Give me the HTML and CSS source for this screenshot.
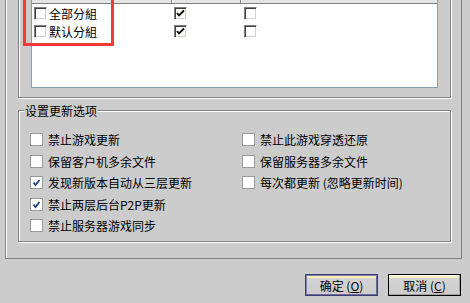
FILE: index.html
```html
<!DOCTYPE html>
<html>
<head>
<meta charset="utf-8">
<link rel="stylesheet" href="styles.css">
</head>
<body>
<div class="tabpage">
  <div class="group group-list">
    <div class="listbox">
      <div class="lv-header">
        <div class="hc hc1"></div>
        <div class="hc hc2"></div>
        <div class="hc hc3"></div>
      </div>
      <div class="lv-row">
        <div class="cell c1"><span class="lcb"></span><span class="lbl">全部分組</span></div>
        <div class="cell c2"><span class="lcb on"><svg viewBox="0 0 9 9" width="9" height="9"><path d="M1 4 L3 6.5 L8 1.5" fill="none" stroke="#000" stroke-width="1.8"/></svg></span></div>
        <div class="cell c3"><span class="lcb"></span></div>
      </div>
      <div class="lv-row">
        <div class="cell c1"><span class="lcb"></span><span class="lbl">默认分組</span></div>
        <div class="cell c2"><span class="lcb on"><svg viewBox="0 0 9 9" width="9" height="9"><path d="M1 4 L3 6.5 L8 1.5" fill="none" stroke="#000" stroke-width="1.8"/></svg></span></div>
        <div class="cell c3"><span class="lcb"></span></div>
      </div>
    </div>
  </div>
  <div class="group group-opts">
    <div class="legend">设置更新选项</div>
    <div class="opts">
      <label class="opt"><span class="cb"></span><span>禁止游戏更新</span></label>
      <label class="opt"><span class="cb"></span><span>禁止此游戏穿透还原</span></label>
      <label class="opt"><span class="cb"></span><span>保留客户机多余文件</span></label>
      <label class="opt"><span class="cb"></span><span>保留服务器多余文件</span></label>
      <label class="opt"><span class="cb on"><svg viewBox="0 0 9 9" width="9" height="9"><path d="M1.5 4.5 L3.5 7 L7.5 2" fill="none" stroke="#1c3f86" stroke-width="1.8"/></svg></span><span>发现新版本自动从三层更新</span></label>
      <label class="opt"><span class="cb"></span><span>每次都更新 (忽略更新时间)</span></label>
      <label class="opt"><span class="cb on"><svg viewBox="0 0 9 9" width="9" height="9"><path d="M1.5 4.5 L3.5 7 L7.5 2" fill="none" stroke="#1c3f86" stroke-width="1.8"/></svg></span><span>禁止两层后台P2P更新</span></label>
      <span class="opt empty"></span>
      <label class="opt"><span class="cb"></span><span>禁止服务器游戏同步</span></label>
    </div>
  </div>
</div>
<div class="buttons">
  <button class="btn default">确定 (<u>O</u>)</button>
  <button class="btn">取消 (<u>C</u>)</button>
</div>
<div class="highlight"></div>
</body>
</html>
```
FILE: styles.css
```css
* { box-sizing: border-box; }
html, body { margin: 0; padding: 0; }
body {
  width: 470px;
  height: 303px;
  overflow: hidden;
  position: relative;
  background: #cccccc;
  font-family: "Noto Sans CJK SC", "Noto Sans", sans-serif;
  font-size: 12px;
  line-height: 13px;
  color: #000;
}
.tabpage {
  margin: -40px 0 0 5px;
  width: 457px;
  border: 1px solid #808080;
  box-shadow: inset 1px 1px #fff;
  padding: 9px 0 16px 12px;
}
.group {
  width: 433px;
  border: 1px solid #808080;
  box-shadow: inset 1px 1px #fff, 1px 1px #fff;
}
.group-list {
  padding: 14px 0 9px 12px;
}
.listbox {
  width: 407px;
  height: 103px;
  border: 1px solid #7f9db9;
  background: #fff;
}
.lv-header {
  display: flex;
  height: 18px;
  background: #e4e4e4;
  border-bottom: 1px solid #808080;
}
.hc { height: 17px; border-right: 1px solid #808080; box-shadow: 1px 0 #fff; }
.hc1 { width: 140px; }
.hc2 { width: 69px; }
.hc3 { flex: 1; border-right: none; box-shadow: none; }
.lv-row { display: flex; height: 18px; align-items: center; }
.cell { display: flex; align-items: center; }
.c1 { width: 140px; padding-left: 2px; }
.c2 { width: 69px; padding-left: 2px; }
.c3 { padding-left: 3px; }
.lbl { margin-left: 2px; }
.lcb {
  width: 13px; height: 13px;
  border: 1px solid;
  border-color: #808080 #fff #fff #808080;
  box-shadow: inset 1px 1px #404040, inset -1px -1px #d4d0c8;
  background: #fff;
  display: flex; align-items: center; justify-content: center;
}
.group-opts {
  margin-top: 12px;
  height: 132px;
}
.legend {
  display: inline-block;
  margin: -7px 0 0 5px;
  padding: 0 1px;
  background: #cccccc;
  vertical-align: top;
}
.opts {
  display: grid;
  grid-template-columns: 212px 1fr;
  grid-auto-rows: 21.5px;
  padding: 5px 0 0 11px;
}
.opt { display: flex; align-items: center; gap: 5px; }
.cb {
  width: 13px; height: 13px;
  border: 1px solid #9a9a9a;
  background: #fff;
  display: flex; align-items: center; justify-content: center;
}
.buttons {
  display: flex;
  justify-content: flex-end;
  gap: 10px;
  margin-top: 15px;
  padding-right: 9px;
}
.btn {
  width: 73px;
  height: 22px;
  padding: 0;
  font: inherit;
  color: #000;
  border: 1px solid #000;
  background: linear-gradient(#ffffff 0, #ffffff 1px, #f4f0b8 1px, #f4f0b8 3px, #d4d4d4 3px, #cccccc 100%);
  box-shadow: inset -1px -1px #a0a0a0;
}
.btn.default {
  border-color: #3c3c78;
  box-shadow: inset 1px 1px #8080b0, inset -1px -1px #6a6aa0;
}
.highlight {
  position: absolute;
  left: 23px;
  top: -20px;
  width: 91px;
  height: 66px;
  border: 3px solid #f23a3a;
}
```
